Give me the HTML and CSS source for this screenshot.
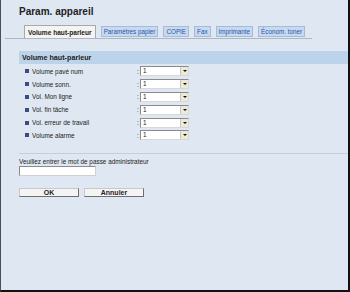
FILE: index.html
```html
<!DOCTYPE html>
<html lang="fr">
<head>
    <meta charset="UTF-8">
    <title>Param. appareil</title>
    <link rel="stylesheet" href="styles.css">
</head>
<body>
    <div class="screen">
        <h1 class="title">Param. appareil</h1>

        <div class="tabs">
            <div class="tab active">Volume haut-parleur</div>
            <div class="tab">Paramètres papier</div>
            <div class="tab">COPIE</div>
            <div class="tab">Fax</div>
            <div class="tab">Imprimante</div>
            <div class="tab">Économ. toner</div>
        </div>

        <div class="section-head">Volume haut-parleur</div>

        <div class="rows">
            <div class="row">
                <span class="bullet"></span><span class="label">Volume pavé num</span>
                <span class="colon">:</span>
                <div class="select"><span class="value">1</span><span class="arrow"></span></div>
            </div>
            <div class="row">
                <span class="bullet"></span><span class="label">Volume sonn.</span>
                <span class="colon">:</span>
                <div class="select"><span class="value">1</span><span class="arrow"></span></div>
            </div>
            <div class="row">
                <span class="bullet"></span><span class="label">Vol. Mon ligne</span>
                <span class="colon">:</span>
                <div class="select"><span class="value">1</span><span class="arrow"></span></div>
            </div>
            <div class="row">
                <span class="bullet"></span><span class="label">Vol. fin tâche</span>
                <span class="colon">:</span>
                <div class="select"><span class="value">1</span><span class="arrow"></span></div>
            </div>
            <div class="row">
                <span class="bullet"></span><span class="label">Vol. erreur de travail</span>
                <span class="colon">:</span>
                <div class="select"><span class="value">1</span><span class="arrow"></span></div>
            </div>
            <div class="row">
                <span class="bullet"></span><span class="label">Volume alarme</span>
                <span class="colon">:</span>
                <div class="select"><span class="value">1</span><span class="arrow"></span></div>
            </div>
        </div>

        <div class="separator"></div>

        <div class="password">
            <label class="pw-label">Veuillez entrer le mot de passe administrateur</label>
            <div class="pw-input"></div>
        </div>

        <div class="buttons">
            <div class="btn">OK</div>
            <div class="btn">Annuler</div>
        </div>
    </div>
</body>
</html>
```

FILE: styles.css
```css
body {
    margin: 0;
    padding: 0;
    font-family: "Liberation Sans", Arial, sans-serif;
}

.screen {
    width: 350px;
    height: 292px;
    box-sizing: border-box;
    background: #dfe8f2;
    border-left: 1px solid #4a4f56;
    border-right: 2px solid #111;
    border-bottom: 2px solid #111;
    overflow: hidden;
}

.title {
    margin: 0 0 0 18px;
    padding-top: 6px;
    font-size: 10px;
    line-height: 11px;
    font-weight: bold;
    color: #222;
}

/* tab strip with the grey line under it */
.tabs {
    display: flex;
    align-items: flex-end;
    gap: 5px;
    height: 13px;
    width: 307px;
    margin: 9px 0 0 4px;
    padding-left: 19px;
    box-sizing: border-box;
    border-bottom: 1px solid #aeb8c3;
}

.tab {
    height: 11px;
    margin-bottom: 1px;
    padding: 0 2px;
    box-sizing: border-box;
    background: #c6d9f0;
    border: 1px solid #a7bbd6;
    color: #2a55a5;
    font-size: 6.3px;
    line-height: 9px;
    white-space: nowrap;
}

.tab.active {
    height: 13px;
    margin-bottom: 0;
    padding: 0 3px;
    background: #f4f4f2;
    border-color: #a9a9a9;
    border-bottom: none;
    color: #222;
    font-weight: bold;
    font-size: 6.6px;
    line-height: 13px;
}

.section-head {
    margin: 12px 0 0 18px;
    height: 13px;
    padding-left: 3px;
    background: #bcd3ea;
    color: #222;
    font-size: 7.2px;
    font-weight: bold;
    line-height: 14px;
}

.rows {
    margin: 1px 0 0 18px;
}

.row {
    display: flex;
    align-items: center;
    height: 12.8px;
    font-size: 6.4px;
    color: #222;
}

.bullet {
    width: 4px;
    height: 4px;
    margin-left: 6px;
    background: #3b4c82;
}

.label {
    width: 105px;
    margin-left: 3px;
    white-space: nowrap;
}

.colon {
    width: 3px;
}

.select {
    display: flex;
    width: 49px;
    height: 10px;
    box-sizing: border-box;
    background: #fff;
    border: 1px solid #8b8b8b;
    border-right-color: #d8d8d8;
    border-bottom-color: #d8d8d8;
}

.value {
    flex: 1;
    padding-left: 2px;
    font-size: 6.4px;
    line-height: 8px;
}

.arrow {
    position: relative;
    width: 7px;
    background: #ece9d8;
    border-left: 1px solid #c9c6b8;
}

/* small triangle on the drop-down button */
.arrow::after {
    content: "";
    position: absolute;
    left: 1.5px;
    top: 3px;
    border-left: 2px solid transparent;
    border-right: 2px solid transparent;
    border-top: 2px solid #111;
}

.separator {
    height: 1px;
    margin: 11px 0 0 18px;
    background: #c5ced9;
}

.password {
    margin: 4px 0 0 18px;
}

.pw-label {
    display: block;
    font-size: 6.4px;
    line-height: 8px;
    color: #222;
}

.pw-input {
    width: 77px;
    height: 10px;
    box-sizing: border-box;
    background: #fff;
    border: 1px solid #8b8b8b;
    border-right-color: #d0d0d0;
    border-bottom-color: #d0d0d0;
}

.buttons {
    display: flex;
    gap: 5px;
    margin: 12px 0 0 18px;
}

.btn {
    width: 60px;
    height: 9px;
    box-sizing: border-box;
    background: #f4f4f4;
    border: 1px solid #c8c8c8;
    border-right-color: #6e6e6e;
    border-bottom-color: #6e6e6e;
    text-align: center;
    font-size: 7px;
    font-weight: bold;
    line-height: 7px;
    color: #222;
}
```
